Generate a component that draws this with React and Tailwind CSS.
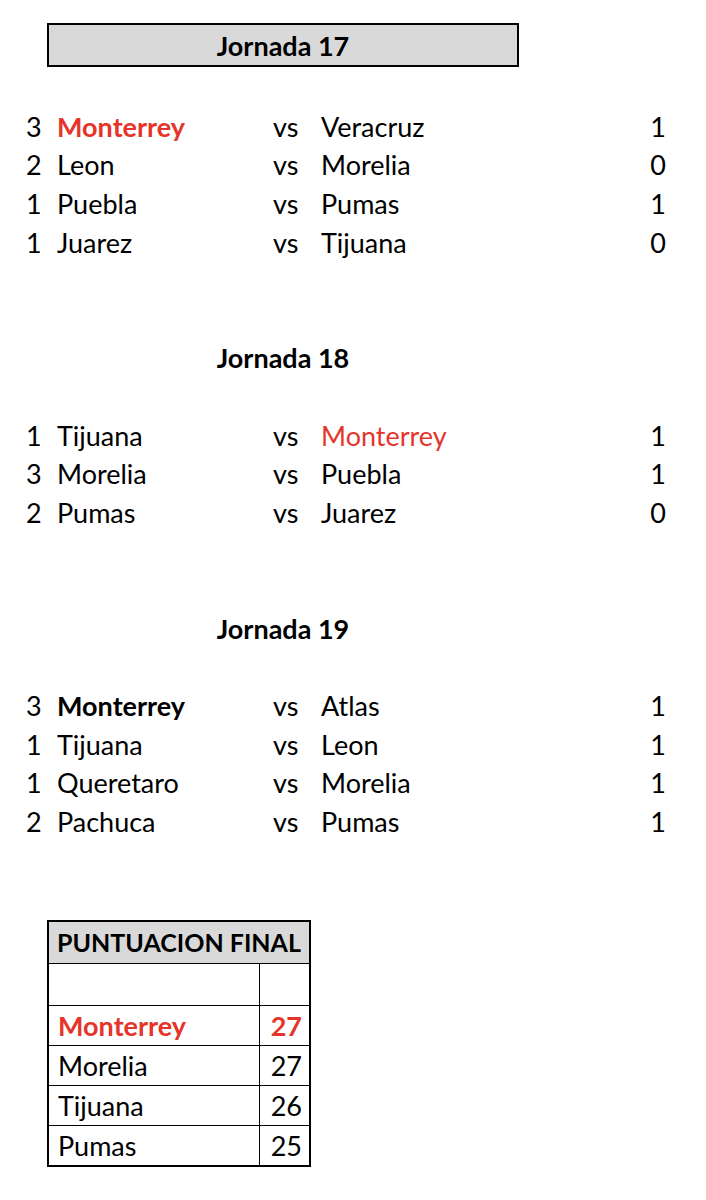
const RED = 'text-[#e5352b]';

const jornadas = [
  {
    title: 'Jornada 17',
    boxed: true,
    rows: [
      { a: '3', home: 'Monterrey', homeStyle: 'red-bold', away: 'Veracruz', b: '1' },
      { a: '2', home: 'Leon', away: 'Morelia', b: '0' },
      { a: '1', home: 'Puebla', away: 'Pumas', b: '1' },
      { a: '1', home: 'Juarez', away: 'Tijuana', b: '0' },
    ],
  },
  {
    title: 'Jornada 18',
    rows: [
      { a: '1', home: 'Tijuana', away: 'Monterrey', awayStyle: 'red', b: '1' },
      { a: '3', home: 'Morelia', away: 'Puebla', b: '1' },
      { a: '2', home: 'Pumas', away: 'Juarez', b: '0' },
    ],
  },
  {
    title: 'Jornada 19',
    rows: [
      { a: '3', home: 'Monterrey', homeStyle: 'bold', away: 'Atlas', b: '1' },
      { a: '1', home: 'Tijuana', away: 'Leon', b: '1' },
      { a: '1', home: 'Queretaro', away: 'Morelia', b: '1' },
      { a: '2', home: 'Pachuca', away: 'Pumas', b: '1' },
    ],
  },
];

const standings = [
  { team: 'Monterrey', pts: '27', hl: true },
  { team: 'Morelia', pts: '27' },
  { team: 'Tijuana', pts: '26' },
  { team: 'Pumas', pts: '25' },
];

function styleFor(s) {
  if (s === 'red-bold') return `${RED} font-bold`;
  if (s === 'red') return RED;
  if (s === 'bold') return 'font-bold';
  return '';
}

function Heading({ title, boxed }) {
  if (boxed) {
    return (
      <div className="ml-[47px] w-[472px] h-[44px] bg-[#d9d9d9] border-2 border-black flex items-center justify-center font-bold">
        {title}
      </div>
    );
  }
  return (
    <div className="ml-[47px] w-[472px] h-[38.6px] flex items-center justify-center font-bold">
      {title}
    </div>
  );
}

function MatchRow({ row }) {
  return (
    <div className="grid grid-cols-[31px_216px_48px_1fr_auto] h-[38.6px] items-center pl-[26px] pr-[40px]">
      <span>{row.a}</span>
      <span className={styleFor(row.homeStyle)}>{row.home}</span>
      <span>vs</span>
      <span className={styleFor(row.awayStyle)}>{row.away}</span>
      <span>{row.b}</span>
    </div>
  );
}

export default function App() {
  return (
    <div className="w-[706px] h-[1200px] bg-white text-black text-[27px] leading-none font-['Lato','Liberation_Sans',sans-serif] pt-[23px]">
      {jornadas.map((j, i) => (
        <div key={j.title} className={i === 0 ? '' : 'mt-[77px]'}>
          <Heading title={j.title} boxed={j.boxed} />
          <div className={j.boxed ? 'mt-[40px]' : 'mt-[39px]'}>
            {j.rows.map((r, k) => (
              <MatchRow key={k} row={r} />
            ))}
          </div>
        </div>
      ))}

      <table className="ml-[47px] mt-[79px] w-[264px] border-collapse border-2 border-black">
        <tbody>
          <tr className="h-[43px] bg-[#d9d9d9]">
            <td colSpan={2} className="border-[1.5px] border-black text-center font-bold text-[25px] px-1">
              PUNTUACION FINAL
            </td>
          </tr>
          <tr className="h-[42px]">
            <td className="border-[1.5px] border-black w-[211px]"></td>
            <td className="border-[1.5px] border-black"></td>
          </tr>
          {standings.map((s) => (
            <tr key={s.team} className="h-[40px]">
              <td className={`border-[1.5px] border-black pl-[9px] ${s.hl ? `${RED} font-bold` : ''}`}>{s.team}</td>
              <td className={`border-[1.5px] border-black text-right pr-[7px] ${s.hl ? `${RED} font-bold` : ''}`}>{s.pts}</td>
            </tr>
          ))}
        </tbody>
      </table>
    </div>
  );
}
